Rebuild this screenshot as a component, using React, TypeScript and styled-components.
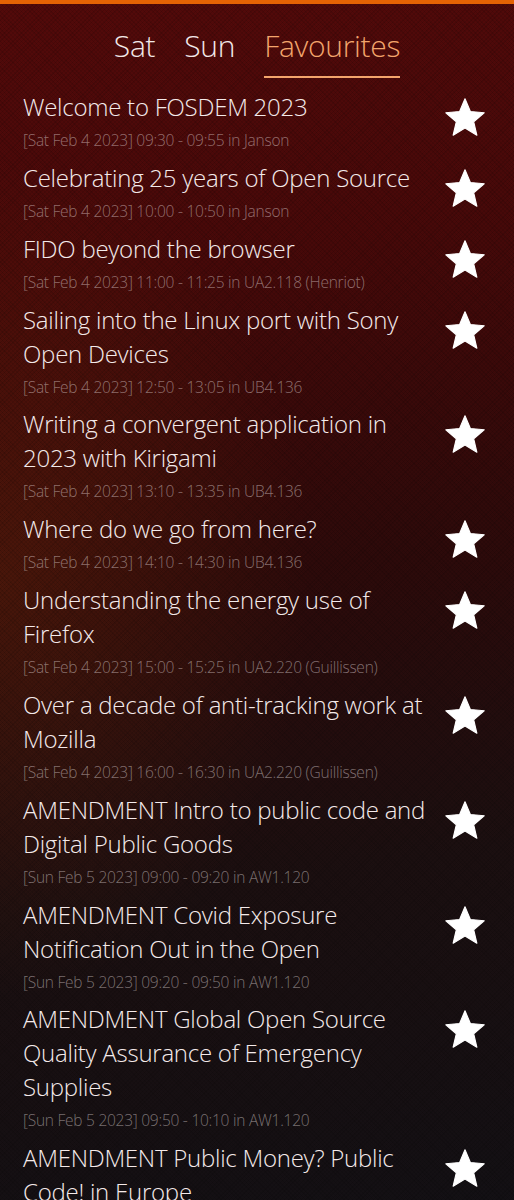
import React from "react";
import styled, { createGlobalStyle } from "styled-components";

const Global = createGlobalStyle`
  html, body { margin: 0; padding: 0; background: #140f12; }
  body { font-family: "Open Sans", "Liberation Sans", sans-serif; }
`;

const Page = styled.div`
  height: 1200px;
  overflow: hidden;
  position: relative;
  border-top: 4px solid #e56304;
  box-sizing: border-box;
  background:
    repeating-linear-gradient(45deg, rgba(0,0,0,0.10) 0 1px, transparent 1px 3px),
    repeating-linear-gradient(-45deg, rgba(0,0,0,0.10) 0 1px, transparent 1px 3px),
    radial-gradient(ellipse 60% 35% at 0% 48%, rgba(120, 45, 10, 0.35), transparent 100%),
    linear-gradient(172deg, #530a0a 0%, #470909 22%, #2d0a0a 48%, #1b0f10 72%, #131014 100%);
`;

const Tabs = styled.nav`
  display: flex;
  justify-content: center;
  gap: 29px;
  padding-top: 22px;
`;

const Tab = styled.div<{ $active?: boolean }>`
  font-size: 30px;
  font-weight: 300;
  line-height: 40px;
  letter-spacing: -0.3px;
  padding-bottom: 10px;
  color: ${(p) => (p.$active ? "#f3a56c" : "#f2e8e8")};
  border-bottom: 2px solid ${(p) => (p.$active ? "#f3a56c" : "transparent")};
`;

const List = styled.ul`
  list-style: none;
  margin: 12px 0 0;
  padding: 0 26px 0 23px;
  display: flex;
  flex-direction: column;
  gap: 9.85px;
`;

const Row = styled.li`
  display: flex;
  align-items: flex-start;
  gap: 8px;
`;

const Info = styled.div`
  flex: 1;
  min-width: 0;
`;

const Title = styled.div`
  font-size: 24px;
  font-weight: 300;
  line-height: 34px;
  letter-spacing: -0.25px;
  color: #f4eaea;
`;

const Meta = styled.div`
  margin-top: 5px;
  font-size: 15.5px;
  font-weight: 300;
  line-height: 22px;
  letter-spacing: -0.25px;
  color: rgba(250, 238, 238, 0.44);
`;

const StarButton = styled.svg`
  flex: none;
  width: 46px;
  height: 46px;
  margin-top: 5px;
  fill: #ffffff;
`;

const Star = () => (
  <StarButton viewBox="0 0 24 24">
    <path
      d="M12 17.27L18.18 21l-1.64-7.03L22 9.24l-7.19-.61L12 2 9.19 8.63 2 9.24l5.46 4.73L5.82 21z"
      stroke="#ffffff"
      strokeWidth="0.6"
      strokeLinejoin="round"
    />
  </StarButton>
);

const talks: [string, string][] = [
  ["Welcome to FOSDEM 2023", "[Sat Feb 4 2023] 09:30 - 09:55 in Janson"],
  ["Celebrating 25 years of Open Source", "[Sat Feb 4 2023] 10:00 - 10:50 in Janson"],
  ["FIDO beyond the browser", "[Sat Feb 4 2023] 11:00 - 11:25 in UA2.118 (Henriot)"],
  ["Sailing into the Linux port with Sony Open Devices", "[Sat Feb 4 2023] 12:50 - 13:05 in UB4.136"],
  ["Writing a convergent application in 2023 with Kirigami", "[Sat Feb 4 2023] 13:10 - 13:35 in UB4.136"],
  ["Where do we go from here?", "[Sat Feb 4 2023] 14:10 - 14:30 in UB4.136"],
  ["Understanding the energy use of Firefox", "[Sat Feb 4 2023] 15:00 - 15:25 in UA2.220 (Guillissen)"],
  ["Over a decade of anti-tracking work at Mozilla", "[Sat Feb 4 2023] 16:00 - 16:30 in UA2.220 (Guillissen)"],
  ["AMENDMENT Intro to public code and Digital Public Goods", "[Sun Feb 5 2023] 09:00 - 09:20 in AW1.120"],
  ["AMENDMENT Covid Exposure Notification Out in the Open", "[Sun Feb 5 2023] 09:20 - 09:50 in AW1.120"],
  ["AMENDMENT Global Open Source Quality Assurance of Emergency Supplies", "[Sun Feb 5 2023] 09:50 - 10:10 in AW1.120"],
  ["AMENDMENT Public Money? Public Code! in Europe", "[Sun Feb 5 2023] 10:10 - 10:30 in AW1.120"],
];

export default function App() {
  return (
    <>
      <Global />
      <Page>
        <Tabs>
          <Tab>Sat</Tab>
          <Tab>Sun</Tab>
          <Tab $active>Favourites</Tab>
        </Tabs>
        <List>
          {talks.map(([t, m]) => (
            <Row key={t}>
              <Info>
                <Title>{t}</Title>
                <Meta>{m}</Meta>
              </Info>
              <Star />
            </Row>
          ))}
        </List>
      </Page>
    </>
  );
}
